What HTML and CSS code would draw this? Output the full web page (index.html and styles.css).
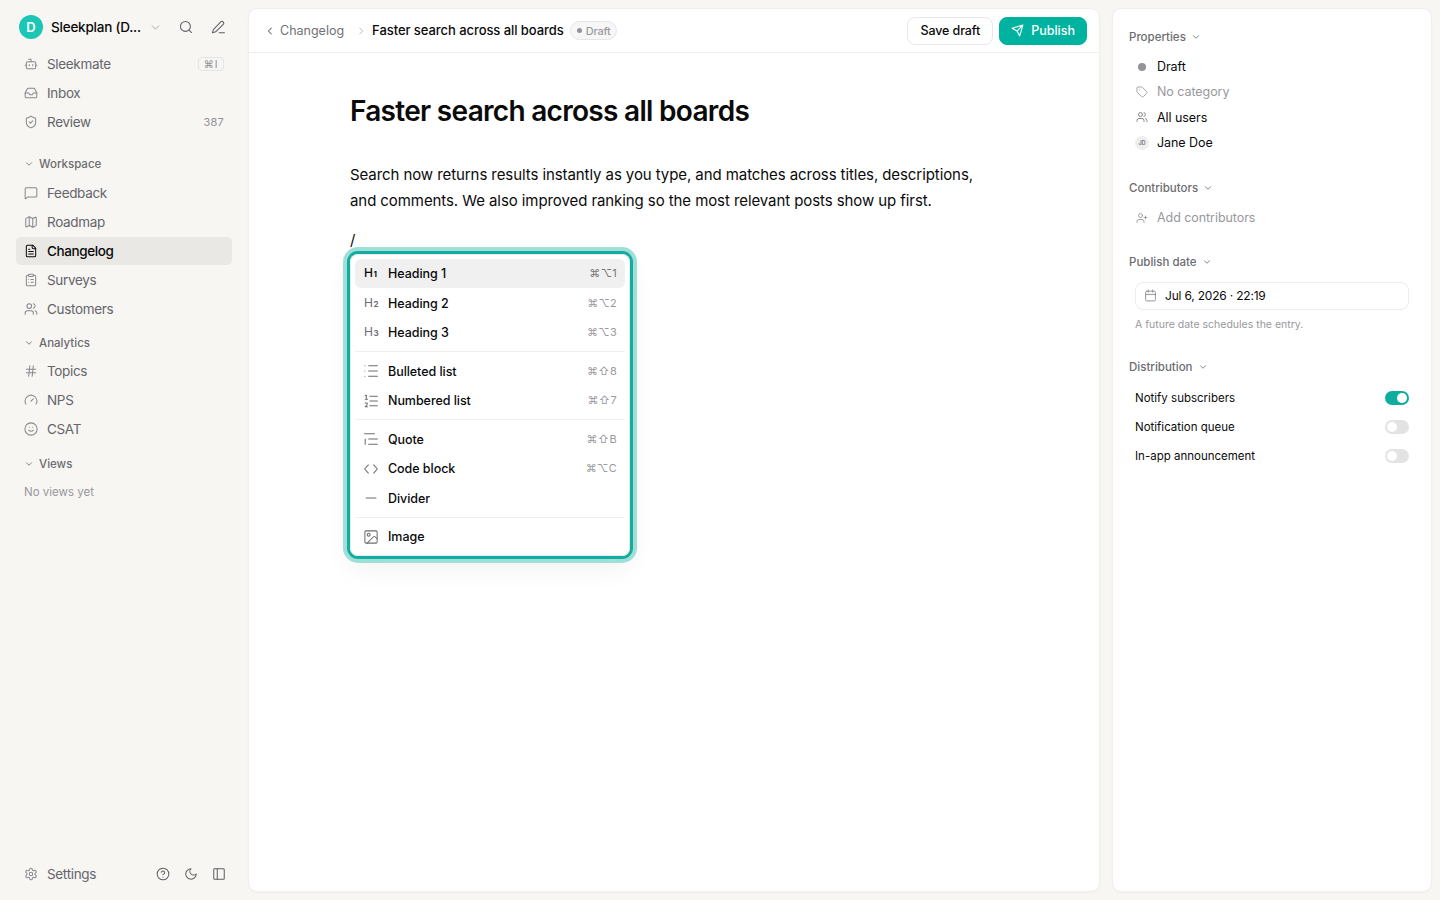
FILE: index.html
```html
<!DOCTYPE html>
<html lang="en">
<head>
  <meta charset="UTF-8">
  <meta name="viewport" content="width=device-width, initial-scale=1.0">
  <title>Faster search across all boards - Changelog</title>
  <link rel="stylesheet" href="styles.css">
</head>
<body>
  <!-- icon sprite -->
  <svg class="sprite" width="0" height="0">
    <symbol id="i-down" viewBox="0 0 24 24"><path d="m6 9 6 6 6-6"/></symbol>
    <symbol id="i-left" viewBox="0 0 24 24"><path d="m15 19-7-7 7-7"/></symbol>
    <symbol id="i-right" viewBox="0 0 24 24"><path d="m9 19 7-7-7-7"/></symbol>
    <symbol id="i-search" viewBox="0 0 24 24"><circle cx="11" cy="11" r="8.500"/><path d="m21.500 21.500-4.300-4.300"/></symbol>
    <symbol id="i-pen" viewBox="0 0 24 24"><path d="M14 22h9"/><path d="M21 3.200a3 3 0 0 0-4.300 0L4 16.500 2.500 22 8 20.300 21 7.500a3 3 0 0 0 0-4.300z"/></symbol>
    <symbol id="i-bot" viewBox="0 0 24 24"><path d="M12 8V4H8"/><rect x="4" y="8" width="16" height="12" rx="2"/><path d="M2 14h2M20 14h2M15 13v2M9 13v2"/></symbol>
    <symbol id="i-inbox" viewBox="0 0 24 24"><path d="M22 12h-6l-2 3h-4l-2-3H2"/><path d="M5.450 5.110 2 12v6a2 2 0 0 0 2 2h16a2 2 0 0 0 2-2v-6l-3.450-6.890A2 2 0 0 0 16.760 4H7.240a2 2 0 0 0-1.790 1.110z"/></symbol>
    <symbol id="i-shield" viewBox="0 0 24 24"><path d="M20 13c0 5-3.500 7.500-7.660 8.950a1 1 0 0 1-.67-.01C7.500 20.500 4 18 4 13V6a1 1 0 0 1 1-1c2 0 4.500-1.200 6.240-2.720a1.170 1.170 0 0 1 1.520 0C14.510 3.810 17 5 19 5a1 1 0 0 1 1 1z"/><path d="m9 12 2 2 4-4"/></symbol>
    <symbol id="i-message" viewBox="0 0 24 24"><path d="M22 17a2 2 0 0 1-2 2H6.800a2 2 0 0 0-1.400.6l-2.200 2.200A.7.7 0 0 1 2 21.300V5a2 2 0 0 1 2-2h16a2 2 0 0 1 2 2z"/></symbol>
    <symbol id="i-map" viewBox="0 0 24 24"><path d="M14.100 5.550a2 2 0 0 0 1.800 0l3.650-1.830A1 1 0 0 1 21 4.620v12.760a1 1 0 0 1-.55.9l-4.550 2.270a2 2 0 0 1-1.800 0l-4.200-2.100a2 2 0 0 0-1.800 0l-3.650 1.830A1 1 0 0 1 3 19.380V6.620a1 1 0 0 1 .55-.9l4.550-2.270a2 2 0 0 1 1.800 0z"/><path d="M15 5.760v15M9 3.240v15"/></symbol>
    <symbol id="i-file" viewBox="0 0 24 24"><path d="M15 2H6a2 2 0 0 0-2 2v16a2 2 0 0 0 2 2h12a2 2 0 0 0 2-2V7z"/><path d="M14 2v4a2 2 0 0 0 2 2h4M10 9H8M16 13H8M16 17H8"/></symbol>
    <symbol id="i-clipboard" viewBox="0 0 24 24"><rect x="8" y="2" width="8" height="4" rx="1"/><path d="M16 4h2a2 2 0 0 1 2 2v14a2 2 0 0 1-2 2H6a2 2 0 0 1-2-2V6a2 2 0 0 1 2-2h2M12 11h4M12 16h4M8 11h.01M8 16h.01"/></symbol>
    <symbol id="i-contributor" viewBox="0 0 24 24"><path d="M16 21v-2a4 4 0 0 0-4-4H6a4 4 0 0 0-4 4v2M19 8v6M22 11h-6"/><circle cx="9" cy="7" r="4"/></symbol>
    <symbol id="i-people" viewBox="0 0 24 24"><path d="M16 21v-2a4 4 0 0 0-4-4H6a4 4 0 0 0-4 4v2M22 21v-2a4 4 0 0 0-3-3.870M16 3.130a4 4 0 0 1 0 7.750"/><circle cx="9" cy="7" r="4"/></symbol>
    <symbol id="i-hash" viewBox="0 0 24 24"><path d="M4 9h16M4 15h16M10 3 8 21M16 3l-2 18"/></symbol>
    <symbol id="i-gauge" viewBox="0 0 24 24"><path d="m12 14 4-4M3.340 19a10 10 0 1 1 17.320 0"/></symbol>
    <symbol id="i-smile" viewBox="0 0 24 24"><circle cx="12" cy="12" r="10.500"/><path d="M8 14s1.500 2 4 2 4-2 4-2M9 9h.01M15 9h.01"/></symbol>
    <symbol id="i-gear" viewBox="0 0 24 24"><path d="M12.220 2h-.44a2 2 0 0 0-2 2v.18a2 2 0 0 1-1 1.730l-.43.25a2 2 0 0 1-2 0l-.15-.08a2 2 0 0 0-2.730.73l-.22.38a2 2 0 0 0 .73 2.730l.15.1a2 2 0 0 1 1 1.720v.51a2 2 0 0 1-1 1.740l-.15.09a2 2 0 0 0-.73 2.730l.22.38a2 2 0 0 0 2.730.73l.15-.08a2 2 0 0 1 2 0l.43.25a2 2 0 0 1 1 1.730V20a2 2 0 0 0 2 2h.44a2 2 0 0 0 2-2v-.18a2 2 0 0 1 1-1.730l.43-.25a2 2 0 0 1 2 0l.15.08a2 2 0 0 0 2.730-.73l.22-.39a2 2 0 0 0-.73-2.730l-.15-.08a2 2 0 0 1-1-1.740v-.5a2 2 0 0 1 1-1.740l.15-.09a2 2 0 0 0 .73-2.730l-.22-.38a2 2 0 0 0-2.730-.73l-.15.08a2 2 0 0 1-2 0l-.43-.25a2 2 0 0 1-1-1.730V4a2 2 0 0 0-2-2z"/><circle cx="12" cy="12" r="3"/></symbol>
    <symbol id="i-help" viewBox="0 0 24 24"><circle cx="12" cy="12" r="10"/><path d="M9.090 9a3 3 0 0 1 5.830 1c0 2-3 3-3 3M12 17h.01"/></symbol>
    <symbol id="i-moon" viewBox="0 0 24 24"><path d="M12 3a6 6 0 0 0 9 9 9 9 0 1 1-9-9z"/></symbol>
    <symbol id="i-panel" viewBox="0 0 24 24"><rect x="3" y="3" width="18" height="18" rx="1.500"/><path d="M9 3v18"/></symbol>
    <symbol id="i-send" viewBox="0 0 24 24"><path d="M22 2 16 22l-5-9-9-5zM22 2 11 13"/></symbol>
    <symbol id="i-tag" viewBox="0 0 24 24"><path d="M12.590 2.590A2 2 0 0 0 11.170 2H4a2 2 0 0 0-2 2v7.170a2 2 0 0 0 .59 1.420l8.700 8.700a2.430 2.430 0 0 0 3.420 0l6.580-6.580a2.430 2.430 0 0 0 0-3.420zM7.500 7.500h.01"/></symbol>
    <symbol id="i-calendar" viewBox="0 0 24 24"><rect x="3" y="4" width="18" height="18" rx="2"/><path d="M8 2v4M16 2v4M3 10h18"/></symbol>
    <symbol id="i-bullets" viewBox="0 0 24 24"><path d="M8 3h15M8 12h15M8 21h15M1.500 3h.01M1.500 12h.01M1.500 21h.01"/></symbol>
    <symbol id="i-numbers" viewBox="0 0 24 24"><path d="M10 4h13M10 12h13M10 20h13M2 3l2-1v7M2 9h4M2 15.500h3.500v2.500L2 22h4"/></symbol>
    <symbol id="i-quote" viewBox="0 0 24 24"><path d="M1 3h17M8 12h15M8 21h15M2 12v9"/></symbol>
    <symbol id="i-code" viewBox="0 0 24 24"><path d="m16.500 19 6.500-7-6.500-7M7.500 5 1 12l6.500 7"/></symbol>
    <symbol id="i-minus" viewBox="0 0 24 24"><path d="M3.500 12h17"/></symbol>
    <symbol id="i-image" viewBox="0 0 24 24"><rect x="1.500" y="1.500" width="21" height="21" rx="2"/><circle cx="8" cy="8" r="2.500"/><path d="m22.500 15-3.400-3.400a2 2 0 0 0-2.900 0L5.500 22.500"/></symbol>
  </svg>

  <div class="app">
    <aside class="sidebar">
      <div class="workspace">
        <span class="logo">D</span>
        <span class="workspace-name">Sleekplan (D...</span>
        <svg class="icon chev"><use href="#i-down"/></svg>
        <svg class="icon tool"><use href="#i-search"/></svg>
        <svg class="icon tool"><use href="#i-pen"/></svg>
      </div>

      <nav class="nav">
        <a class="nav-item"><svg class="icon"><use href="#i-bot"/></svg>Sleekmate<kbd>⌘I</kbd></a>
        <a class="nav-item"><svg class="icon"><use href="#i-inbox"/></svg>Inbox</a>
        <a class="nav-item"><svg class="icon"><use href="#i-shield"/></svg>Review<span class="count">387</span></a>
      </nav>

      <div class="nav-title first"><svg class="icon"><use href="#i-down"/></svg>Workspace</div>
      <nav class="nav">
        <a class="nav-item"><svg class="icon"><use href="#i-message"/></svg>Feedback</a>
        <a class="nav-item"><svg class="icon"><use href="#i-map"/></svg>Roadmap</a>
        <a class="nav-item active"><svg class="icon"><use href="#i-file"/></svg>Changelog</a>
        <a class="nav-item"><svg class="icon"><use href="#i-clipboard"/></svg>Surveys</a>
        <a class="nav-item"><svg class="icon"><use href="#i-people"/></svg>Customers</a>
      </nav>

      <div class="nav-title"><svg class="icon"><use href="#i-down"/></svg>Analytics</div>
      <nav class="nav">
        <a class="nav-item"><svg class="icon"><use href="#i-hash"/></svg>Topics</a>
        <a class="nav-item"><svg class="icon"><use href="#i-gauge"/></svg>NPS</a>
        <a class="nav-item"><svg class="icon"><use href="#i-smile"/></svg>CSAT</a>
      </nav>

      <div class="nav-title views"><svg class="icon"><use href="#i-down"/></svg>Views</div>
      <div class="nav-empty">No views yet</div>

      <div class="sidebar-footer">
        <a class="nav-item"><svg class="icon"><use href="#i-gear"/></svg>Settings</a>
        <svg class="icon tool"><use href="#i-help"/></svg>
        <svg class="icon tool"><use href="#i-moon"/></svg>
        <svg class="icon tool"><use href="#i-panel"/></svg>
      </div>
    </aside>

    <main class="card editor">
      <header class="topbar">
        <a class="back"><svg class="icon"><use href="#i-left"/></svg>Changelog</a>
        <svg class="icon crumb-sep"><use href="#i-right"/></svg>
        <span class="crumb">Faster search across all boards</span>
        <span class="badge"><i class="dot"></i>Draft</span>
        <button class="btn">Save draft</button>
        <button class="btn primary"><svg class="icon"><use href="#i-send"/></svg>Publish</button>
      </header>

      <article class="post">
        <h1>Faster search across all boards</h1>
        <p>Search now returns results instantly as you type, and matches across titles, descriptions, and comments. We also improved ranking so the most relevant posts show up first.</p>
        <div class="slash">/
          <div class="menu">
            <div class="menu-item selected"><span class="h-icon">H<b>1</b></span>Heading 1<span class="keys">⌘⌥1</span></div>
            <div class="menu-item"><span class="h-icon">H<b>2</b></span>Heading 2<span class="keys">⌘⌥2</span></div>
            <div class="menu-item"><span class="h-icon">H<b>3</b></span>Heading 3<span class="keys">⌘⌥3</span></div>
            <hr>
            <div class="menu-item"><svg class="icon"><use href="#i-bullets"/></svg>Bulleted list<span class="keys">⌘⇧8</span></div>
            <div class="menu-item"><svg class="icon"><use href="#i-numbers"/></svg>Numbered list<span class="keys">⌘⇧7</span></div>
            <hr>
            <div class="menu-item"><svg class="icon"><use href="#i-quote"/></svg>Quote<span class="keys">⌘⇧B</span></div>
            <div class="menu-item"><svg class="icon"><use href="#i-code"/></svg>Code block<span class="keys">⌘⌥C</span></div>
            <div class="menu-item"><svg class="icon"><use href="#i-minus"/></svg>Divider</div>
            <hr>
            <div class="menu-item"><svg class="icon"><use href="#i-image"/></svg>Image</div>
          </div>
        </div>
      </article>
    </main>

    <aside class="card details">
      <section class="properties">
        <h2>Properties<svg class="icon"><use href="#i-down"/></svg></h2>
        <div class="prop"><span class="prop-icon"><i class="dot"></i></span>Draft</div>
        <div class="prop muted"><span class="prop-icon"><svg class="icon"><use href="#i-tag"/></svg></span>No category</div>
        <div class="prop"><span class="prop-icon"><svg class="icon"><use href="#i-people"/></svg></span>All users</div>
        <div class="prop"><span class="prop-icon avatar">JD</span>Jane Doe</div>
      </section>

      <section class="contributors">
        <h2>Contributors<svg class="icon"><use href="#i-down"/></svg></h2>
        <div class="prop muted"><span class="prop-icon"><svg class="icon"><use href="#i-contributor"/></svg></span>Add contributors</div>
      </section>

      <section class="publish">
        <h2>Publish date<svg class="icon"><use href="#i-down"/></svg></h2>
        <div class="date"><svg class="icon"><use href="#i-calendar"/></svg>Jul 6, 2026 · 22:19</div>
        <div class="hint">A future date schedules the entry.</div>
      </section>

      <section class="distribution">
        <h2>Distribution<svg class="icon"><use href="#i-down"/></svg></h2>
        <div class="switch-row">Notify subscribers<span class="switch on"></span></div>
        <div class="switch-row">Notification queue<span class="switch"></span></div>
        <div class="switch-row">In-app announcement<span class="switch"></span></div>
      </section>
    </aside>
  </div>
</body>
</html>
```

FILE: styles.css
```css
* { box-sizing: border-box; }
body { margin: 0; font-family: Inter, "Liberation Sans", sans-serif; background: #f7f6f3; color: #0a0a0b; }
.sprite { position: absolute; }
.app { display: flex; height: 900px; padding: 8px 8px 8px 0; overflow: hidden; }
.icon { width: 14px; height: 14px; flex: none; fill: none; stroke: currentColor; stroke-width: 1.75; stroke-linecap: round; stroke-linejoin: round; }
.card { background: #fff; border: 1px solid #f0efec; border-radius: 9px; box-shadow: 0 1px 2px rgba(0,0,0,0.03); }

/* sidebar */
.sidebar { width: 248px; padding: 1px 16px 0; display: flex; flex-direction: column; flex: none; }
.workspace { display: flex; align-items: center; height: 36px; margin-bottom: 5px; padding: 0 7px 0 3px; }
.logo { width: 24px; height: 24px; border-radius: 50%; background: #1bc6b4; color: #fff; font-size: 13px; font-weight: 600; display: flex; align-items: center; justify-content: center; }
.workspace-name { margin-left: 8px; width: 98px; font-size: 13.5px; font-weight: 500; letter-spacing: -0.22px; white-space: nowrap; }
.workspace .chev { width: 13px; height: 13px; color: #a5a5a8; margin-right: 17px; }
.tool { color: #5f5f63; }
.workspace .tool + .tool { margin-left: 18px; }
.nav { display: flex; flex-direction: column; gap: 1px; }
.nav-item { display: flex; align-items: center; gap: 9px; height: 28px; padding: 0 8px; border-radius: 5px; font-size: 13.5px; letter-spacing: -0.33px; color: #65656a; }
.nav-item .icon { color: #88888c; }
.nav-item.active { background: #e9e8e4; color: #0a0a0b; font-weight: 500; letter-spacing: -0.4px; }
.nav-item.active .icon { color: #0a0a0b; }
.nav-item kbd { margin-left: auto; height: 14px; width: 26px; border: 1px solid #e6e5e2; border-radius: 4px; font: 10px/12px Inter, sans-serif; text-align: center; letter-spacing: 1px; color: #8e8e92; }
.count { margin-left: auto; font-size: 11px; letter-spacing: 0.2px; color: #929296; }
.nav-title { display: flex; align-items: center; gap: 5px; height: 28px; margin-top: 6px; padding-left: 8px; font-size: 11.5px; font-weight: 500; color: #6c6c70; }
.nav-title.first { margin-top: 14px; margin-bottom: 1px; }
.nav-title.views { margin-top: 7px; }
.nav-title .icon { width: 10px; height: 10px; stroke-width: 2; }
.nav-empty { height: 28px; line-height: 28px; padding-left: 8px; font-size: 11.5px; color: #98989c; }
.sidebar-footer { margin-top: auto; margin-bottom: 4px; display: flex; align-items: center; gap: 14px; padding-right: 6px; }
.sidebar-footer .nav-item { margin-right: auto; }

/* editor */
.editor { width: 852px; flex: none; }
.topbar { display: flex; align-items: center; height: 44px; padding: 0 12px 0 16px; border-bottom: 1px solid #efefef; }
.back { display: flex; align-items: center; gap: 5px; font-size: 12.5px; font-weight: 400; color: #717175; }
.back .icon { width: 10px; height: 10px; stroke-width: 2.5; }
.crumb-sep { width: 10px; height: 10px; color: #9a9a9e; margin: 0 6px 0 12px; }
.crumb { font-size: 13px; line-height: 17px; font-weight: 500; letter-spacing: -0.06px; }
.badge { display: flex; align-items: center; gap: 4px; height: 19px; margin: 0 auto 0 6px; padding: 0 6px 0 6px; border: 1px solid #e6e6e6; border-radius: 10px; background: #f7f7f7; font-size: 11px; font-weight: 500; letter-spacing: -0.25px; color: #9a9a9e; }
.dot { width: 5px; height: 5px; border-radius: 50%; background: #949498; }
.btn { display: flex; align-items: center; height: 28px; padding: 0 12px; border: 1px solid #e8e8e8; border-radius: 8px; background: #fff; color: #0a0a0b; font-family: inherit; font-size: 12.5px; font-weight: 500; letter-spacing: -0.1px; }
.btn.primary { margin-left: 6px; gap: 7px; padding: 0 11px; border-color: #00b3a1; background: #00b3a1; color: #fff; letter-spacing: 0; }
.btn .icon { width: 13px; height: 13px; stroke-width: 2; }
.post { padding: 38px 0 0 101px; width: 740px; }
.post h1 { margin: 0; font-size: 28px; line-height: 40px; font-weight: 600; letter-spacing: -0.7px; }
.post p { margin: 31px 0 0; font-size: 15px; line-height: 26px; letter-spacing: -0.08px; }
.slash { position: relative; margin-top: 13px; font-size: 15px; line-height: 26px; }

/* slash command menu */
.menu { position: absolute; left: 0; top: 27px; width: 280px; padding: 5px; background: #fff; border-radius: 8px; box-shadow: inset 0 0 0 1px #e5e9e9, 0 0 0 3px #12ada0, 0 0 0 7px #a0dfd8, 0 12px 28px rgba(0,0,0,0.06); font-size: 12.5px; font-weight: 500; line-height: 19px; letter-spacing: -0.05px; }
.menu-item { display: flex; align-items: center; height: 29.4px; padding: 0 8px 0 9px; border-radius: 6px; }
.menu-item .icon, .h-icon { width: 14px; margin-right: 10px; color: #6c6c70; }
.menu-item.selected { background: #f0f0f0; }
.h-icon { font-size: 12px; font-weight: 400; white-space: nowrap; }
.h-icon b { font-size: 8px; font-weight: 700; margin-left: 0.5px; }
.menu-item.selected .h-icon { color: #0a0a0b; font-weight: 500; }
.keys { margin-left: auto; font-size: 11px; font-weight: 400; letter-spacing: 0.3px; color: #9a9a9e; }
.selected .keys { color: #77777b; }
.menu hr { margin: 4px 0 4.3px; border: 0; height: 1px; background: #efefef; }

/* details */
.details { width: 320px; margin-left: 12px; padding: 16px 22px 0 16px; }
.details h2 { display: flex; align-items: center; gap: 5px; height: 24px; margin: 0; font-size: 11.5px; font-weight: 500; color: #6c6c70; }
.details h2 .icon { width: 10px; height: 10px; stroke-width: 2; }
.prop { display: flex; align-items: center; gap: 8px; height: 25.3px; padding-left: 6px; font-size: 12.5px; letter-spacing: -0.06px; }
.muted { color: #98989c; }
.prop-icon { width: 14px; height: 14px; display: flex; align-items: center; justify-content: center; color: #77777b; }
.muted .prop-icon { color: #98989c; }
.prop-icon .icon { width: 12px; height: 12px; }
.prop-icon .dot { width: 8px; height: 8px; }
.avatar { border-radius: 50%; background: #eee; font-size: 5.5px; font-weight: 600; }
.properties h2, .contributors h2 { margin-bottom: 5px; }
.contributors { margin-top: 21px; }
.publish { margin-top: 19.5px; }
.date { display: flex; align-items: center; gap: 8px; height: 28px; margin: 8px 0 0 6px; padding: 0 8px; border: 1px solid #ececec; border-radius: 8px; font-size: 12px; letter-spacing: -0.2px; }
.date .icon { width: 13px; height: 13px; color: #929296; }
.hint { margin: 7px 0 0 6px; font-size: 10.5px; line-height: 16px; color: #98989c; }
.distribution { margin-top: 22px; }
.distribution h2 { margin-bottom: 5px; }
.switch-row { display: flex; align-items: center; justify-content: space-between; height: 28.7px; padding-left: 6px; font-size: 11.5px; }
.switch { width: 24px; height: 14px; padding: 2px; border-radius: 7px; background: #e3e3e3; display: flex; }
.switch::after { content: ""; width: 10px; height: 10px; border-radius: 50%; background: #fff; }
.switch.on { background: #0fad9f; justify-content: flex-end; }
```
